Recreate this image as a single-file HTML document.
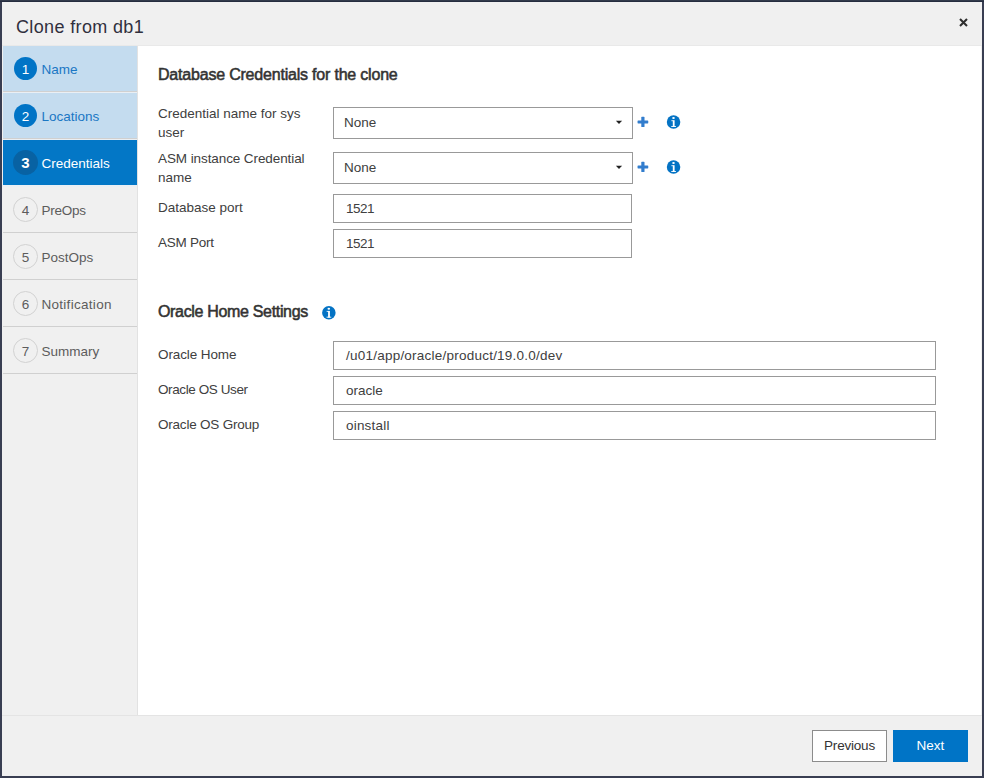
<!DOCTYPE html>
<html lang="en">
<head>
<meta charset="utf-8">
<title>Clone from db1</title>
<style>
html,body{margin:0;padding:0;}
body{width:984px;height:778px;overflow:hidden;background:#393e52;position:relative;
  font-family:"Liberation Sans",Arial,sans-serif;font-size:14px;color:#333;}
*{box-sizing:border-box;}
.abs{position:absolute;}
#dialog{left:2px;top:2px;width:980px;height:774px;background:#f0f0f0;}
#shade{left:0;top:0;width:984px;height:2px;background:linear-gradient(#323a4b 50%,#252c3f 50%);}
#title{left:16px;top:13px;font-size:18px;line-height:28px;color:#30303e;white-space:nowrap;letter-spacing:0.36px;}
#close{left:959px;top:18.3px;width:9px;height:9px;}
#content{left:138px;top:46px;width:843px;height:669px;background:#fff;}
#sideline{left:137px;top:46px;width:1px;height:670px;background:#e2e2e2;}
#headline{left:2px;top:45px;width:980px;height:1px;background:#e9e9e9;}
#footline{left:2px;top:715px;width:980px;height:1px;background:#e4e4e4;}
.step{left:3px;width:134px;height:45px;}
.step.done{background:#c4dcef;}
.step.cur{background:#0377c6;}
.sep{left:3px;width:134px;height:1px;background:#d0d0d0;}
.sep2{left:3px;width:134px;height:1px;background:#eaeff4;}
.num{left:11px;top:11px;width:23px;height:23px;border-radius:50%;text-align:center;line-height:25px;font-size:13.5px;}
.done .num{background:#0074c6;color:#fff;}
.cur .num{background:#0862a3;color:#fff;font-weight:bold;left:10px;top:10px;width:25px;height:25px;line-height:25px;font-size:15px;}
.todo .num{border:1px solid #d2d2d2;color:#5c5c5c;left:10px;top:10px;width:25px;height:25px;line-height:25px;}
.lbl{left:38.4px;top:12px;line-height:23px;white-space:nowrap;font-size:13.5px;}
.done .lbl{color:#1a77c4;}
.cur .lbl{color:#fff;}
.todo .lbl{color:#5c5c5c;}
h2{margin:0;font-size:16px;font-weight:normal;-webkit-text-stroke:0.55px #333;letter-spacing:-0.2px;color:#333;white-space:nowrap;line-height:20px;}
.flabel{left:158px;font-size:13.5px;line-height:19px;color:#404040;width:170px;}
.inp{left:333px;border:1px solid #999;background:#fff;height:29px;line-height:27px;padding-left:12px;font-size:13.5px;color:#404040;white-space:nowrap;}
.sel{height:32px;line-height:30px;padding-left:10px;}
.btn{top:730px;height:32px;line-height:30px;text-align:center;font-size:13.5px;}
</style>
</head>
<body>
<div id="dialog" class="abs"></div>
<div id="shade" class="abs"></div>
<div id="title" class="abs">Clone from db1</div>
<svg id="close" class="abs" viewBox="0 0 9 9"><path d="M1 1 L8 8 M8 1 L1 8" stroke="#2e2e2e" stroke-width="2.05" fill="none"/></svg>

<div id="content" class="abs"></div>
<div id="sideline" class="abs"></div>
<div id="footline" class="abs"></div>
<div id="headline" class="abs"></div>

<!-- wizard steps -->
<div class="abs step done" style="top:46px"><div class="abs num">1</div><div class="abs lbl">Name</div></div>
<div class="abs sep" style="top:91px"></div><div class="abs sep2" style="top:92px"></div>
<div class="abs step done" style="top:93px"><div class="abs num">2</div><div class="abs lbl">Locations</div></div>
<div class="abs sep" style="top:138px"></div><div class="abs sep2" style="top:139px"></div>
<div class="abs step cur" style="top:140px"><div class="abs num">3</div><div class="abs lbl">Credentials</div></div>
<div class="abs sep2" style="top:185px"></div><div class="abs sep2" style="top:186px"></div>
<div class="abs step todo" style="top:187px"><div class="abs num">4</div><div class="abs lbl" style="letter-spacing:-0.25px">PreOps</div></div>
<div class="abs sep" style="top:232px"></div>
<div class="abs step todo" style="top:234px"><div class="abs num">5</div><div class="abs lbl">PostOps</div></div>
<div class="abs sep" style="top:279px"></div>
<div class="abs step todo" style="top:281px"><div class="abs num">6</div><div class="abs lbl" style="letter-spacing:0.3px">Notification</div></div>
<div class="abs sep" style="top:326px"></div>
<div class="abs step todo" style="top:328px"><div class="abs num">7</div><div class="abs lbl">Summary</div></div>
<div class="abs sep" style="top:373px"></div>

<!-- section 1 -->
<h2 class="abs" style="left:158px;top:65px">Database Credentials for the clone</h2>

<div class="abs flabel" style="top:104px">Credential name for sys<br>user</div>
<div class="abs inp sel" style="top:107px;width:300px">None</div>
<div class="abs flabel" style="top:149px"><span style="letter-spacing:-0.09px">ASM instance Credential</span><br>name</div>
<div class="abs inp sel" style="top:152px;width:300px">None</div>
<div class="abs flabel" style="top:198px">Database port</div>
<div class="abs inp" style="top:194px;width:299px;letter-spacing:-0.5px">1521</div>
<div class="abs flabel" style="top:233px;letter-spacing:-0.25px">ASM Port</div>
<div class="abs inp" style="top:229px;width:299px;letter-spacing:-0.5px">1521</div>

<!-- section 2 -->
<h2 class="abs" style="left:158px;top:302px;letter-spacing:-0.33px">Oracle Home Settings</h2>
<div class="abs flabel" style="top:345px;letter-spacing:-0.1px">Oracle Home</div>
<div class="abs inp" style="top:341px;width:603px;letter-spacing:0.23px">/u01/app/oracle/product/19.0.0/dev</div>
<div class="abs flabel" style="top:380px;letter-spacing:-0.4px">Oracle OS User</div>
<div class="abs inp" style="top:376px;width:603px">oracle</div>
<div class="abs flabel" style="top:415px;letter-spacing:-0.21px">Oracle OS Group</div>
<div class="abs inp" style="top:411px;width:603px;letter-spacing:0.2px">oinstall</div>


<!-- select carets, add (+) and info icons -->
<svg class="abs" style="left:0;top:0;width:984px;height:778px;pointer-events:none" viewBox="0 0 984 778">
  <path transform="translate(619 122.4)" d="M-3.1 -1.55 L3.1 -1.55 L0 1.55 Z" fill="#222"/>
  <path transform="translate(619 167.4)" d="M-3.1 -1.55 L3.1 -1.55 L0 1.55 Z" fill="#222"/>
  <g transform="translate(642.9 121.95)" fill="#327dcd"><rect x="-5.35" y="-1.5" width="10.7" height="3" rx="0.6"/><rect x="-1.6" y="-5.1" width="3.2" height="10.2" rx="0.6"/></g>
  <g transform="translate(642.9 166.95)" fill="#327dcd"><rect x="-5.35" y="-1.5" width="10.7" height="3" rx="0.6"/><rect x="-1.6" y="-5.1" width="3.2" height="10.2" rx="0.6"/></g>
  <g transform="translate(673.55 122)"><circle cx="0" cy="0" r="6.75" fill="#0473c4"/><ellipse cx="-0.05" cy="-4.0" rx="1.3" ry="0.95" fill="#fff"/><rect x="-0.75" y="-1.8" width="1.8" height="6.7" fill="#fff"/><rect x="-2.2" y="-1.8" width="2" height="1.0" fill="#fff" fill-opacity="0.85"/><rect x="-2.3" y="4.0" width="4.7" height="0.95" fill="#fff" fill-opacity="0.95"/></g>
  <g transform="translate(673.55 167)"><circle cx="0" cy="0" r="6.75" fill="#0473c4"/><ellipse cx="-0.05" cy="-4.0" rx="1.3" ry="0.95" fill="#fff"/><rect x="-0.75" y="-1.8" width="1.8" height="6.7" fill="#fff"/><rect x="-2.2" y="-1.8" width="2" height="1.0" fill="#fff" fill-opacity="0.85"/><rect x="-2.3" y="4.0" width="4.7" height="0.95" fill="#fff" fill-opacity="0.95"/></g>
  <g transform="translate(328.85 312.7)"><circle cx="0" cy="0" r="6.75" fill="#0473c4"/><ellipse cx="-0.05" cy="-4.0" rx="1.3" ry="0.95" fill="#fff"/><rect x="-0.75" y="-1.8" width="1.8" height="6.7" fill="#fff"/><rect x="-2.2" y="-1.8" width="2" height="1.0" fill="#fff" fill-opacity="0.85"/><rect x="-2.3" y="4.0" width="4.7" height="0.95" fill="#fff" fill-opacity="0.95"/></g>
</svg>

<!-- footer buttons -->
<div class="abs btn" style="left:812px;width:75px;background:#fff;border:1px solid #8c8c8c;color:#333;letter-spacing:-0.2px;">Previous</div>
<div class="abs btn" style="left:893px;width:75px;background:#0074c6;color:#fff;line-height:32px;">Next</div>
</body>
</html>
